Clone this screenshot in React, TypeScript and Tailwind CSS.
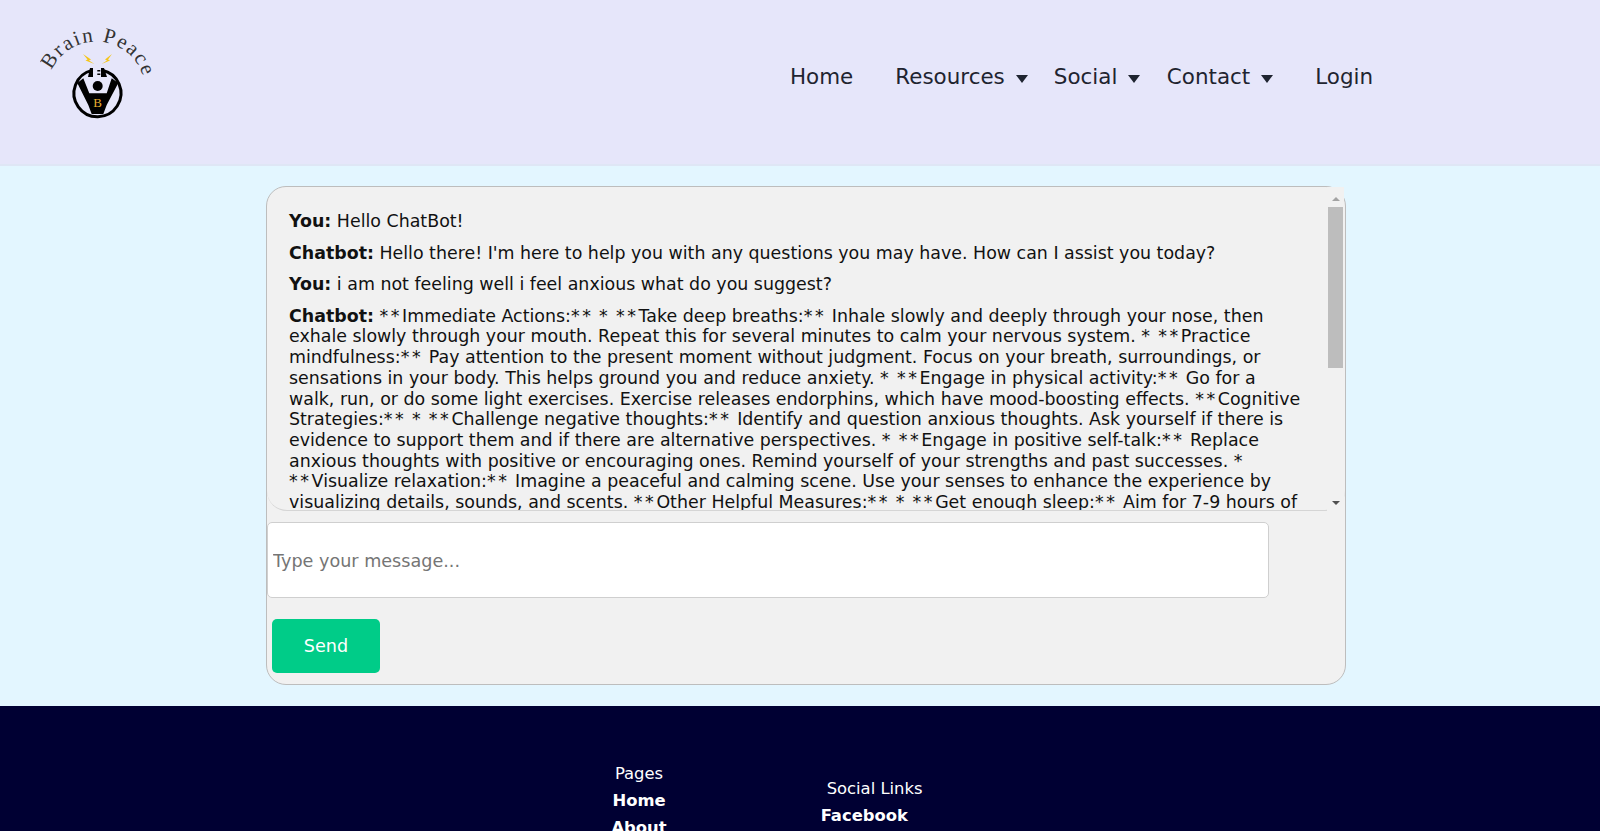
const font = { fontFamily: '"DejaVu Sans", Verdana, sans-serif' };

const answer =
  "**Immediate Actions:** * **Take deep breaths:** Inhale slowly and deeply through your nose, then exhale slowly through your mouth. Repeat this for several minutes to calm your nervous system. * **Practice mindfulness:** Pay attention to the present moment without judgment. Focus on your breath, surroundings, or sensations in your body. This helps ground you and reduce anxiety. * **Engage in physical activity:** Go for a walk, run, or do some light exercises. Exercise releases endorphins, which have mood-boosting effects. **Cognitive Strategies:** * **Challenge negative thoughts:** Identify and question anxious thoughts. Ask yourself if there is evidence to support them and if there are alternative perspectives. * **Engage in positive self-talk:** Replace anxious thoughts with positive or encouraging ones. Remind yourself of your strengths and past successes. * **Visualize relaxation:** Imagine a peaceful and calming scene. Use your senses to enhance the experience by visualizing details, sounds, and scents. **Other Helpful Measures:** * **Get enough sleep:** Aim for 7-9 hours of quality sleep each night.";

function Logo() {
  return (
    <svg width="116" height="100" viewBox="0 0 116 100">
      <defs>
        <path id="logo-arc" d="M9.3 54 A49 49 0 0 1 105 71.3 A49 49 0 0 1 95 101" fill="none" />
      </defs>
      <text fontFamily='"Liberation Serif", serif' fontSize="21" letterSpacing="1.7" fill="#333">
        <textPath href="#logo-arc" startOffset="6">Brain Peace</textPath>
      </text>
      <path d="M43 32 L51 37.5 L49 38.5 L54.5 42 L45.5 38.5 L47.5 37.5 Z" fill="#f5c518" />
      <path d="M72 32 L65 37.5 L67 38.5 L61.5 42 L70 38.5 L68 37.5 Z" fill="#f5c518" />
      <path d="M52 48.4 A23.5 23.5 0 1 0 62 48.2" fill="none" stroke="#000" strokeWidth="3" />
      <path d="M37.3 61 L43.3 56.3 L49.3 71.3 L66.7 71.3 L71.7 56.3 L78.3 61 L66.7 83 L63.3 92 L51.7 92 L48.3 83 Z" fill="#000" />
      <circle cx="57.7" cy="64" r="5" fill="#000" />
      <path d="M48 55 L50 46 L53 46 L53 55 Z M61 46 L64 46 L67 55 L61 55 Z M57.3 48 h3 v1.5 h-3 z M57.3 51.5 h3 v1.5 h-3 z" fill="#000" />
      <text x="57.7" y="85" textAnchor="middle" fontFamily='"Liberation Serif", serif' fontSize="13" fill="#e8b030">B</text>
    </svg>
  );
}

function Caret() {
  return <span className="ml-[11px] inline-block h-0 w-0 translate-y-[2px] border-x-[6.5px] border-t-[8px] border-x-transparent border-t-[#1f2430]" />;
}

function Header() {
  return (
    <header className="flex h-[166px] shrink-0 items-start border-b-2 border-[#dfe6f5] bg-[#e6e6fa]">
      <div className="ml-[40px] mt-[22px]">
        <Logo />
      </div>
      <nav className="ml-[634px] mt-[63px] flex items-center text-[21.44px] leading-[28px] text-[#1f2430]">
        <a>Home</a>
        <a className="ml-[42px] flex items-center">Resources<Caret /></a>
        <a className="ml-[26px] flex items-center">Social<Caret /></a>
        <a className="ml-[26.5px] flex items-center">Contact<Caret /></a>
        <a className="ml-[42px]">Login</a>
      </nav>
    </header>
  );
}

function ScrollBar() {
  return (
    <div className="absolute bottom-[-1px] right-px top-0 flex w-[17px] flex-col items-center bg-[#f1f1f1]">
      <div className="flex h-[20px] items-end justify-center pb-[6px]">
        <span className="h-0 w-0 border-x-[4px] border-b-[4px] border-x-transparent border-b-[#a3a3a3]" />
      </div>
      <div className="h-[161px] w-[15px] bg-[#bdbdbd]" />
      <div className="flex flex-1 items-end justify-center pb-[7px]">
        <span className="h-0 w-0 border-x-[4px] border-t-[4px] border-x-transparent border-t-[#505050]" />
      </div>
    </div>
  );
}

// the asterisks run wider in the reference than in this font
function WideStars({ text }: { text: string }) {
  return (
    <>
      {text.split(/(\*+)/).map((part, i) =>
        part.startsWith("*") ? (
          <span key={i} className="tracking-[2.6px]">{part}</span>
        ) : (
          part
        ),
      )}
    </>
  );
}

function ChatBox() {
  return (
    <section className="ml-[266px] mt-[20px] h-[499px] w-[1080px] shrink-0 rounded-[20px] border border-[#bdbdbd] bg-[#f1f1f1]">
      <div className="relative h-[324px]">
        <div className="h-full overflow-hidden rounded-[20px] border-b border-[#d5d5d5] pl-[22px] pr-[42px] pt-[24px] text-[17.42px] leading-[20.7px] text-[#111]">
          <p className="mb-[10.9px]"><b>You:</b> Hello ChatBot!</p>
          <p className="mb-[10.9px]"><b>Chatbot:</b> Hello there! I'm here to help you with any questions you may have. How can I assist you today?</p>
          <p className="mb-[10.9px]"><b>You:</b> i am not feeling well i feel anxious what do you suggest?</p>
          <p>
            <b>Chatbot:</b> <WideStars text={answer} />
          </p>
        </div>
        <ScrollBar />
      </div>
      <input
        placeholder="Type your message..."
        className="mt-[11px] block h-[76px] w-[1002px] rounded-[5px] border border-[#cfcfcf] bg-white px-[5px] pt-px text-[17.6px] outline-none placeholder:text-[#757575]"
      />
      <button className="ml-[5px] mt-[21px] block h-[54px] w-[108px] rounded-[5px] bg-[#00cc88] pt-px text-[17.6px] font-medium text-white">
        Send
      </button>
    </section>
  );
}

function Footer() {
  return (
    <footer className="mt-[21px] flex flex-1 justify-center bg-[#000033] text-[16.4px] text-white">
      <div className="ml-[-66px] mt-[56px] flex flex-col items-center">
        <span>Pages</span>
        <a className="mt-[2px] font-bold">Home</a>
        <a className="mt-[3px] font-bold">About</a>
      </div>
      <div className="ml-[160px] mt-[71px] flex flex-col">
        <span>Social Links</span>
        <a className="ml-[-6px] mt-[2px] font-bold">Facebook</a>
      </div>
    </footer>
  );
}

export default function App() {
  return (
    <div style={font} className="flex h-screen flex-col overflow-hidden bg-[#e3f6ff]">
      <Header />
      <ChatBox />
      <Footer />
    </div>
  );
}
